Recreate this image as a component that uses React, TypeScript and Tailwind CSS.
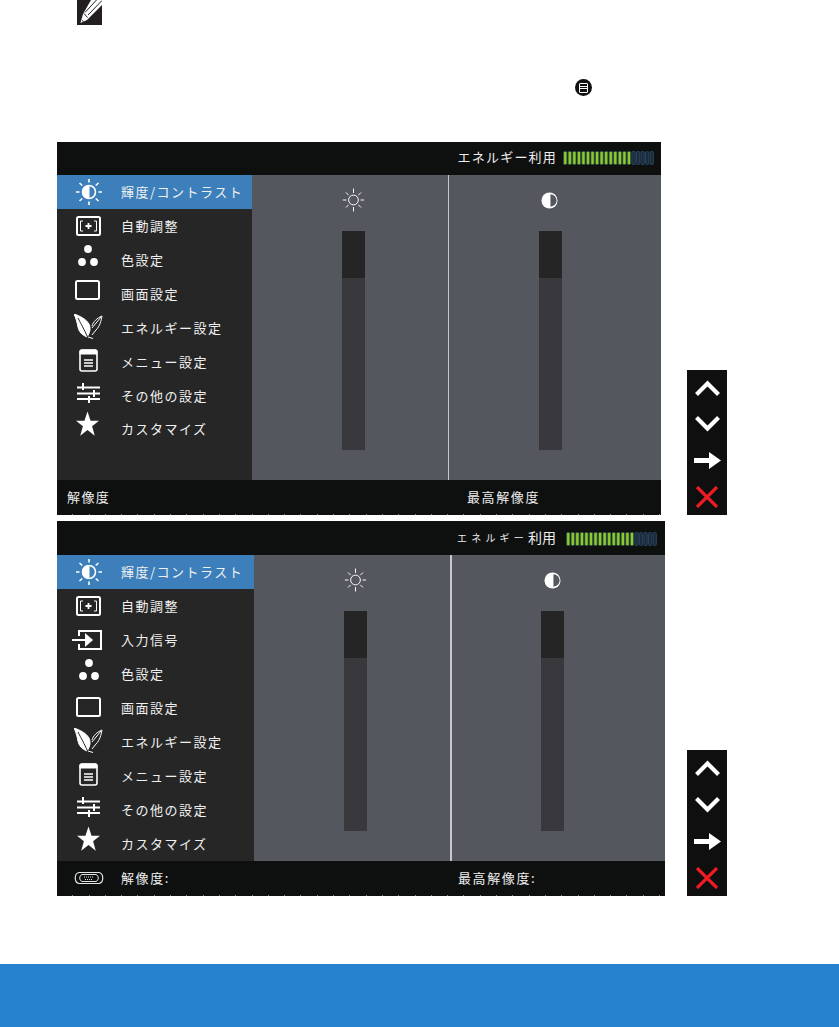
const cjk = "font-['Noto_Sans_CJK_JP','Liberation_Serif',serif]";

function SunHalf() {
	return (
		<svg width="26" height="28" viewBox="0 0 26 28" fill="none" stroke="white">
			<circle cx="13" cy="14" r="6.500" strokeWidth="1.600" />
			<path d="M13 7.500a6.500 6.500 0 0 0 0 13z" fill="white" />
			<path d="M13 1v3.500M13 23.500V27M0 14h3.500M22.500 14H26M3.500 5l2.800 2.500M22.500 5l-2.800 2.500M3.500 23l2.800-2.500M22.500 23l-2.800-2.500" strokeWidth="1.600" />
		</svg>
	);
}

function SunOutline() {
	return (
		<svg width="26" height="28" viewBox="0 0 26 28" fill="none" stroke="white" strokeWidth="1.100">
			<circle cx="13" cy="14" r="5.500" />
			<path d="M13 1v5M13 22v5M1 14h4M21 14h4M4.500 5.500l3 3M21.500 5.500l-3 3M4.500 22.500l3-3M21.500 22.500l-3-3" />
		</svg>
	);
}

function Contrast({ className }: { className?: string }) {
	return (
		<svg className={className} width="17" height="17" viewBox="0 0 18 18">
			<circle cx="9" cy="9" r="8.500" fill="white" />
			<path d="M10 2.500a6.500 6.500 0 0 1 0 13z" fill="#54575e" />
		</svg>
	);
}

function AutoAdjust() {
	return (
		<svg width="25" height="20" viewBox="0 0 25 20" fill="none" stroke="white">
			<rect x="1" y="1" width="23" height="18" rx="1.500" strokeWidth="2" />
			<path d="M7 5H4.500v10H7M18 5h2.500v10H18" strokeWidth="1" />
			<path d="M12.500 7v6M9.500 10h6" strokeWidth="1.800" />
		</svg>
	);
}

function InputSignal() {
	return (
		<svg width="30" height="20" viewBox="0 0 30 20" fill="none" stroke="white" strokeWidth="2">
			<path d="M7 6V1h22v18H7v-5" />
			<path d="M0 10h14" />
			<path d="M13 3l8 7-8 7z" fill="white" stroke="none" />
		</svg>
	);
}

function ColorDots() {
	return (
		<svg width="20" height="21" viewBox="0 0 20 21" fill="white">
			<circle cx="10" cy="4" r="3.900" />
			<circle cx="4" cy="17" r="3.900" />
			<circle cx="16" cy="17" r="3.900" />
		</svg>
	);
}

function Display() {
	return (
		<svg width="25" height="20" viewBox="0 0 25 20" fill="none" stroke="white" strokeWidth="2">
			<rect x="1" y="1" width="23" height="18" rx="1.500" />
		</svg>
	);
}

function Leaves() {
	return (
		<svg width="29" height="25" viewBox="0 0 29 25" fill="none" stroke="white">
			<path d="M0 0c6 2 12 5 15 10 2 4 1 9-2 13-5-2-8-5-9-10C3 8 2 4 0 0z" fill="white" />
			<path d="M4 4c3 6 6 11 10 20" stroke="#262626" strokeWidth="1" />
			<path d="M18 12c1-4 5-8 10-10-1 5-2 10-6 14l-4 5M27 3l-9 11" strokeWidth="1" />
			<path d="M14 23l5 1.500" strokeWidth="1" />
		</svg>
	);
}

function MenuDoc() {
	return (
		<svg width="19" height="23" viewBox="0 0 19 23" fill="none" stroke="white">
			<rect x="1" y="1" width="17" height="21" rx="2" strokeWidth="1.600" />
			<path d="M1 2.500A1.500 1.500 0 0 1 2.500 1h14A1.500 1.500 0 0 1 18 2.500V5H1z" fill="white" />
			<path d="M5 11h9M5 14h9M5 17h9" strokeWidth="1.500" />
		</svg>
	);
}

function OtherSliders() {
	return (
		<svg width="23" height="20" viewBox="0 0 23 20" fill="none" stroke="white">
			<path d="M0 4.500h23M0 10.500h23M0 16h23" strokeWidth="2.200" />
			<path d="M6 0v7M17 7v7M12 13v7" strokeWidth="2" />
		</svg>
	);
}

function Star() {
	return (
		<svg width="23" height="26" viewBox="0 0 24 26" fill="white">
			<path d="M12 0l3.200 9.500H24l-7.200 5.800 2.800 10-7.600-6-7.600 6 2.800-10L0 9.500h8.800z" />
		</svg>
	);
}

function VgaPort() {
	return (
		<svg width="30" height="14" viewBox="0 0 30 14" fill="none" stroke="#e5e5e5">
			<path d="M5 1.500h20c5 1 5 10 0 11H5c-5-1-5-10 0-11z" strokeWidth="1.200" />
			<path d="M8 3.500h14c3 1 3 6 0 7H8c-3-1-3-6 0-7z" strokeWidth="1" />
			<path d="M10 6h10M11 8.500h8" strokeWidth="1" strokeDasharray="1 1" />
		</svg>
	);
}

function EnergyBar() {
	return (
		<svg width="91" height="14" viewBox="0 0 91 14">
			{Array.from({ length: 20 }).map((_, i) => (
				<rect
					key={i}
					x={i * 4.55 + 0.6}
					y="0.500"
					width="3.300"
					height="13"
					rx="1"
					fill={i < 15 ? "#8ccb2a" : "#1c2c3c"}
					stroke={i < 15 ? "#2d4a4c" : "#2f4d6b"}
					strokeWidth="0.800"
				/>
			))}
		</svg>
	);
}

function Panel({
	icon,
	className,
	sliderClass,
}: {
	icon: React.ReactNode;
	className: string;
	sliderClass: string;
}) {
	return (
		<div className={`flex flex-col items-start bg-[#54575e] ${className}`}>
			<div className="flex h-[56px] w-[23px] items-center justify-center pb-[6px]">
				{icon}
			</div>
			<div className={`w-[23px] bg-[#38383d] ${sliderClass}`}>
				<div className="h-[47px] bg-[#252525]" />
			</div>
		</div>
	);
}

function MenuRow({
	icon,
	label,
	active,
	iconClass = "",
	textClass = "",
}: {
	icon: React.ReactNode;
	label: string;
	active?: boolean;
	iconClass?: string;
	textClass?: string;
}) {
	return (
		<div
			className={`flex h-[34px] items-center ${active ? "bg-[#3c7fbb]" : ""}`}
		>
			<div className={`flex w-[63px] shrink-0 justify-center ${iconClass}`}>
				{icon}
			</div>
			<div
				className={`whitespace-nowrap pl-px text-[13px] tracking-[1.500px] text-[#f0f0f0] ${cjk} ${textClass}`}
			>
				{label}
			</div>
		</div>
	);
}

function NavButtons({ className }: { className: string }) {
	return (
		<div className={`flex w-[40px] flex-col bg-[#0f0f0f] ${className}`}>
			<div className="flex flex-1 items-center justify-center">
				<svg width="25" height="16" viewBox="0 0 25 16" fill="none" stroke="white" strokeWidth="4.200">
					<path d="M1.500 14.500L12.500 3.500l11 11" />
				</svg>
			</div>
			<div className="flex flex-1 items-center justify-center">
				<svg width="25" height="16" viewBox="0 0 25 16" fill="none" stroke="white" strokeWidth="4.200">
					<path d="M1.500 1.500l11 11 11-11" />
				</svg>
			</div>
			<div className="flex flex-1 items-center justify-center">
				<svg width="27" height="17" viewBox="0 0 27 17" fill="white">
					<path d="M0 6h15V0l12 8.500L15 17v-6H0z" />
				</svg>
			</div>
			<div className="flex flex-1 items-center justify-center">
				<svg width="24" height="22" viewBox="0 0 24 22" fill="none" stroke="#ed1c24" strokeWidth="3.200">
					<path d="M2 1l20 20M22 1L2 21" />
				</svg>
			</div>
		</div>
	);
}

const ticks =
	"bg-[repeating-linear-gradient(90deg,#0e1010_0,#0e1010_15.300px,#8a8a8a_15.300px,#8a8a8a_16.300px)]";

export default function App() {
	return (
		<div className="flex h-[1027px] w-[839px] flex-col overflow-hidden bg-white">
			{/* note icon and the small menu glyph above the screens */}
			<div className="relative h-[142px] shrink-0">
				<div className="ml-[77px] h-[25px] w-[25px] bg-[#231f20]">
					<svg width="25" height="25" viewBox="0 0 25 25">
						<path d="M14 0h11v5L10 20l-6.500 3L6 14z" fill="white" />
						<path d="M19.500 0L8 12.500M25 0.500L11 15" stroke="#231f20" strokeWidth="1" fill="none" />
						<path d="M7 13.500l3.500 4M5 20.500l1.500 1" stroke="#231f20" strokeWidth="1" fill="none" />
					</svg>
				</div>
				<div className="absolute left-[575px] top-[79px] flex h-[17px] w-[17px] items-center justify-center rounded-full bg-[#111]">
					<div className="flex h-[10px] w-[9px] flex-col gap-px rounded-[1px] border border-white pt-[2px]">
						<div className="h-px bg-white" />
						<div className="h-px bg-white" />
					</div>
				</div>
			</div>

			{/* first screen */}
			<div className="flex h-[373px] shrink-0">
				<div className="ml-[57px] flex w-[604px] flex-col">
					<div className="flex h-[33px] items-center justify-end bg-[#0e1010] pr-[7px]">
						<span className={`mb-[3px] mr-[6px] text-[13px] tracking-[1.200px] text-[#eee] ${cjk}`}>
							エネルギー利用
						</span>
						<div className="mb-[2px] flex">
							<EnergyBar />
						</div>
					</div>
					<div className="flex h-[305px]">
						<div className="w-[195px] bg-[#262626]">
							<MenuRow active icon={<SunHalf />} label="輝度/コントラスト" />
							<MenuRow icon={<AutoAdjust />} label="自動調整" iconClass="pb-px" textClass="pb-px" />
							<MenuRow icon={<ColorDots />} label="色設定" iconClass="pb-[9px] pr-[2px]" textClass="pb-px" />
							<MenuRow icon={<Display />} label="画面設定" iconClass="pb-[8px] pr-[2px]" textClass="pb-px" />
							<MenuRow icon={<Leaves />} label="エネルギー設定" iconClass="pb-[4px]" textClass="pb-px" />
							<MenuRow icon={<MenuDoc />} label="メニュー設定" iconClass="pb-[4px]" textClass="pb-px" />
							<MenuRow icon={<OtherSliders />} label="その他の設定" iconClass="pb-[6px]" textClass="pb-px" />
							<MenuRow icon={<Star />} label="カスタマイズ" iconClass="pb-[12px] pr-[2px]" textClass="pb-[3px]" />
						</div>
						<Panel icon={<SunOutline />} sliderClass="h-[219px]" className="w-[196px] pl-[90px]" />
						<div className="w-px bg-[#c8c8c8]" />
						<Panel icon={<Contrast className="mr-[3px]" />} sliderClass="h-[219px]" className="flex-1 pl-[90px]" />
					</div>
					<div className="flex h-[34px] items-center bg-[#0e1010]">
						<span className={`ml-[10px] w-[400px] text-[13px] tracking-[1.400px] text-[#eee] ${cjk}`}>
							解像度
						</span>
						<span className={`text-[13px] tracking-[1.600px] text-[#eee] ${cjk}`}>
							最高解像度
						</span>
					</div>
					<div className={`h-px ${ticks}`} />
				</div>
				<NavButtons className="ml-[26px] mt-[228px] h-[145px]" />
			</div>

			{/* second screen */}
			<div className="mt-[6px] flex h-[375px] shrink-0">
				<div className="ml-[57px] flex w-[608px] flex-col">
					<div className="flex h-[34px] items-center justify-end bg-[#0e1010] pr-[8px]">
						<span className={`mb-px mr-[10px] flex items-center text-[#eee] ${cjk}`}>
							<span className="text-[10px] tracking-[4.200px]">エネルギー</span>
							<span className="text-[14px]">利用</span>
						</span>
						<div className="mt-px flex">
							<EnergyBar />
						</div>
					</div>
					<div className="flex h-[306px]">
						<div className="w-[197px] bg-[#262626]">
							<MenuRow active icon={<SunHalf />} label="輝度/コントラスト" textClass="pl-[3px]" />
							<MenuRow icon={<AutoAdjust />} label="自動調整" />
							<MenuRow icon={<InputSignal />} label="入力信号" iconClass="pr-[3px]" />
							<MenuRow icon={<ColorDots />} label="色設定" iconClass="pb-[10px]" />
							<MenuRow icon={<Display />} label="画面設定" iconClass="pb-[2px]" />
							<MenuRow icon={<Leaves />} label="エネルギー設定" iconClass="pb-[3px]" />
							<MenuRow icon={<MenuDoc />} label="メニュー設定" iconClass="pb-[3px]" />
							<MenuRow icon={<OtherSliders />} label="その他の設定" iconClass="pb-[6px]" />
							<MenuRow icon={<Star />} label="カスタマイズ" iconClass="pb-[10px]" />
						</div>
						<Panel icon={<SunOutline />} sliderClass="h-[220px]" className="w-[196px] pl-[90px]" />
						<div className="w-[2px] bg-[#c8c8c8]" />
						<Panel icon={<Contrast />} sliderClass="h-[220px]" className="flex-1 pl-[89px]" />
					</div>
					<div className="flex h-[34px] items-center bg-[#0e1010]">
						<div className="flex w-[63px] shrink-0 justify-center">
							<VgaPort />
						</div>
						<span className={`ml-px w-[337px] text-[13px] tracking-[1.600px] text-[#eee] ${cjk}`}>
							解像度:
						</span>
						<span className={`text-[13px] tracking-[1.600px] text-[#eee] ${cjk}`}>
							最高解像度:
						</span>
					</div>
					<div className={`h-px ${ticks}`} />
				</div>
				<NavButtons className="ml-[22px] mt-[229px] h-[146px]" />
			</div>

			<div className="mt-auto h-[63px] bg-[#2381ce]" />
		</div>
	);
}
